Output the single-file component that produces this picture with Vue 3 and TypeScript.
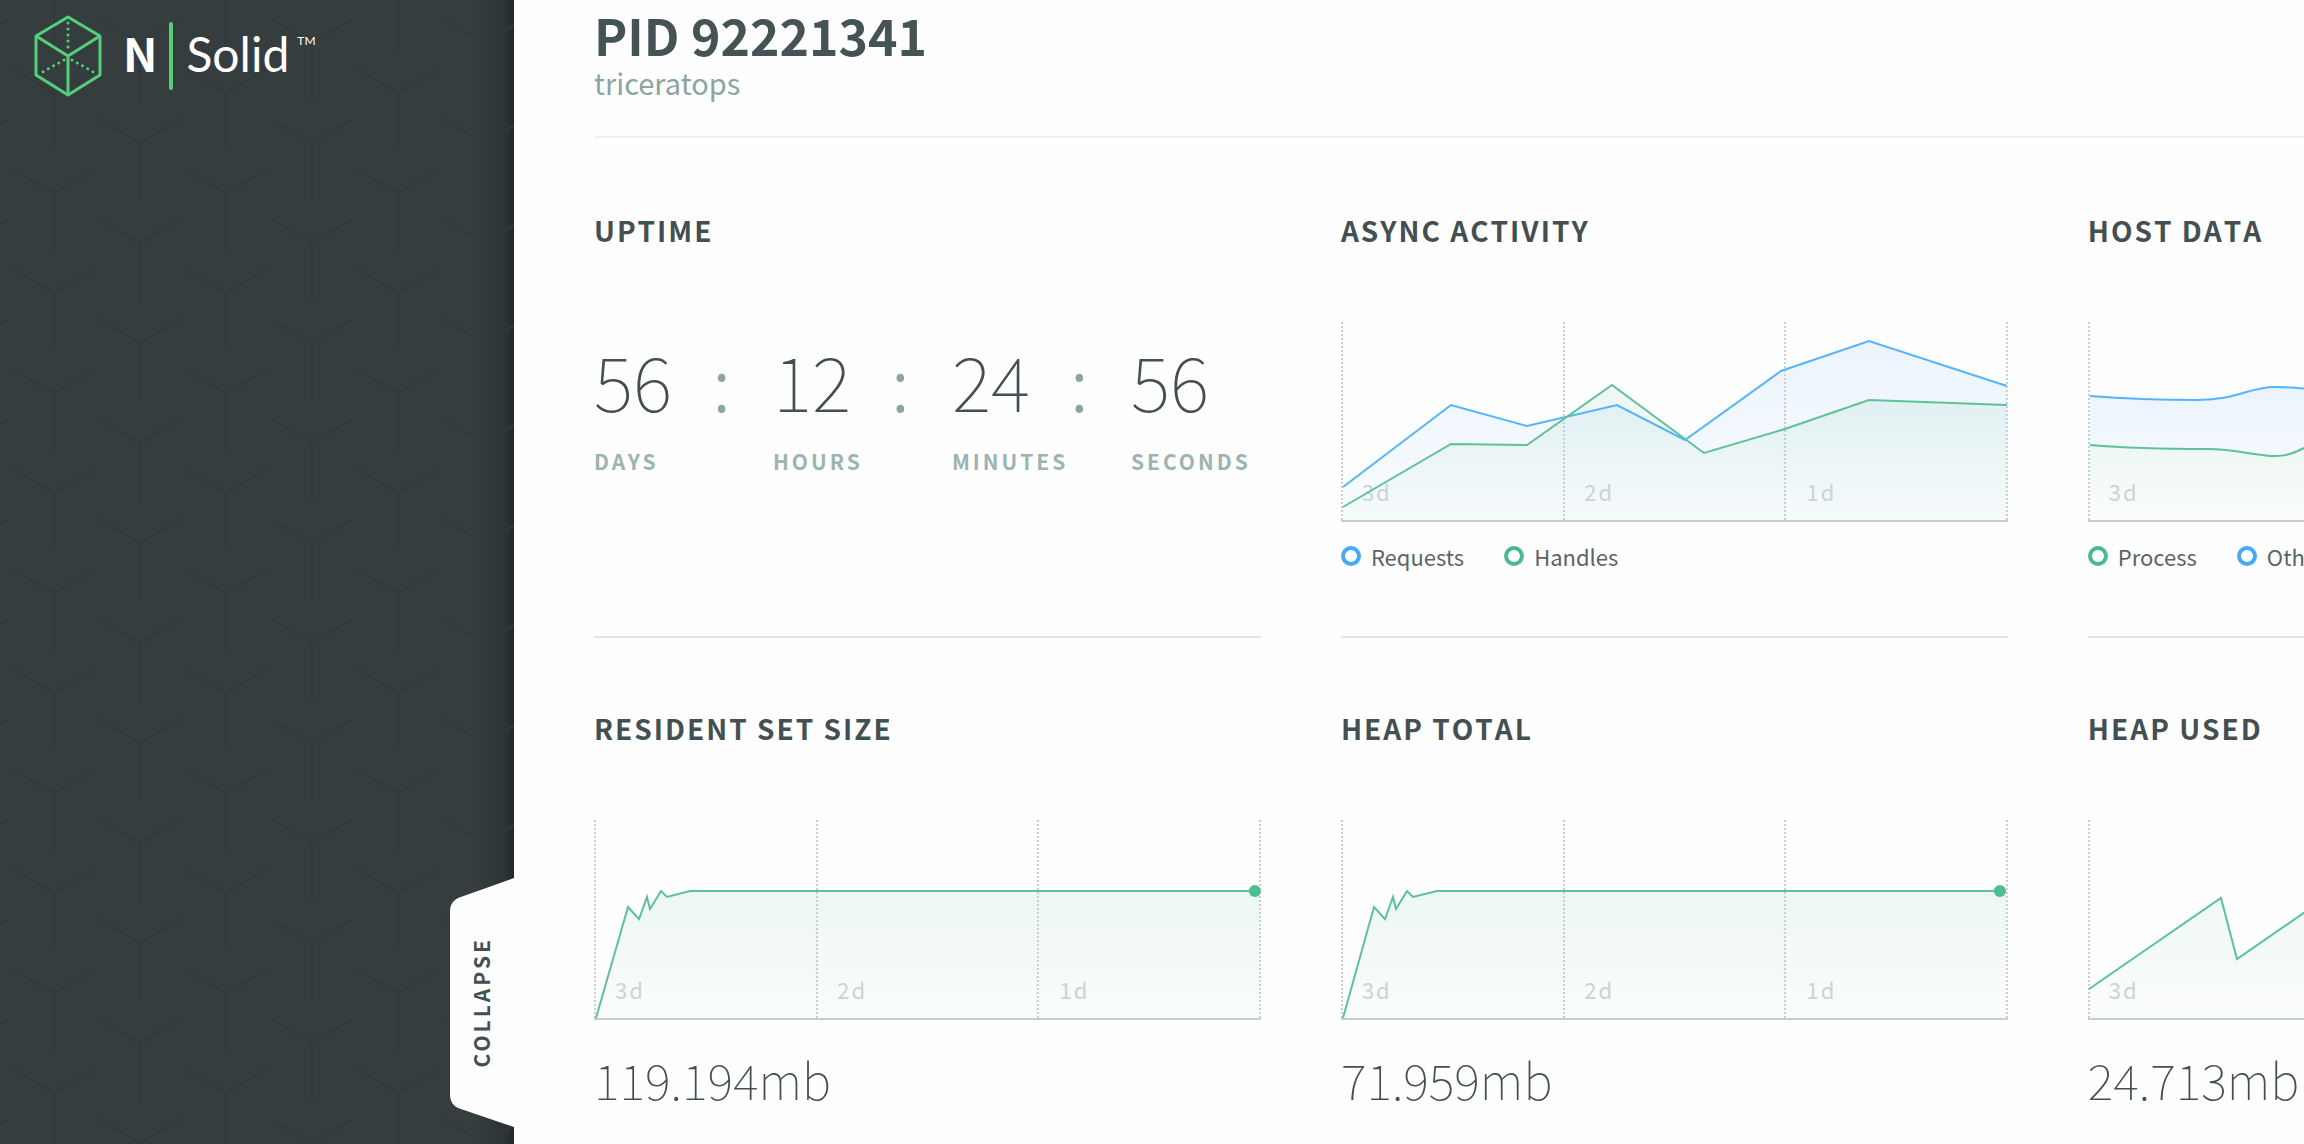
<script setup lang="ts">
type Tone = 'blue' | 'green'

interface Series {
  tone: Tone
  line: string
  start: number
  dot?: [number, number]
  opaque?: boolean
}

interface Legend {
  tone: Tone
  label: string
}

interface Panel {
  id: string
  title: string
  series: Series[]
  legend?: Legend[]
  value?: string
}

const uptime = [
  { value: '56', unit: 'DAYS' },
  { value: '12', unit: 'HOURS' },
  { value: '24', unit: 'MINUTES' },
  { value: '56', unit: 'SECONDS' },
]

const ticks = ['3d', '2d', '1d']
const gridLines = [1, 223, 444, 666]

const panels: Panel[] = [
  {
    id: 'async',
    title: 'ASYNC ACTIVITY',
    series: [
      { tone: 'blue', start: 2, line: 'M2 165L110 83L186 104L276 83L344 118L440 49L528 19L666 64' },
      { tone: 'green', start: 2, line: 'M2 185L110 122L186 123L271 63L363 131L444 107L528 78L666 83' },
    ],
    legend: [
      { tone: 'blue', label: 'Requests' },
      { tone: 'green', label: 'Handles' },
    ],
  },
  {
    id: 'host',
    title: 'HOST DATA',
    series: [
      { tone: 'blue', start: 2, line: 'M2 74C40 77 80 78 110 78C150 78 160 65 187 65C240 65 280 80 340 76C420 70 500 84 666 78' },
      { tone: 'green', start: 2, opaque: true, line: 'M2 123C50 127 90 127 120 127C150 127 166 134 188 134C212 134 220 118 250 116C350 110 450 126 666 120' },
    ],
    legend: [
      { tone: 'green', label: 'Process' },
      { tone: 'blue', label: 'Other' },
    ],
  },
  {
    id: 'rss',
    title: 'RESIDENT SET SIZE',
    series: [
      { tone: 'green', start: 2, line: 'M2 198L34 87L45 99L53 77L56 89L67 71L73 77L96 71H665', dot: [661, 71] },
    ],
    value: '119.194mb',
  },
  {
    id: 'heap-total',
    title: 'HEAP TOTAL',
    series: [
      { tone: 'green', start: 2, line: 'M2 198L33 87L44 99L52 77L55 89L66 71L72 77L96 71H665', dot: [659, 71] },
    ],
    value: '71.959mb',
  },
  {
    id: 'heap-used',
    title: 'HEAP USED',
    series: [
      { tone: 'green', start: 1, line: 'M1 169L133 78L149 139L281 48L297 109L429 60L445 110L666 40' },
    ],
    value: '24.713mb',
  },
]

const area = (s: Series): string => `${s.line}V198H${s.start}Z`
</script>

<template>
  <div class="app">
    <aside class="sidebar">
      <svg class="texture" aria-hidden="true">
        <defs>
          <pattern id="cubes" width="172" height="100" patternUnits="userSpaceOnUse">
            <g fill="none" stroke="#2f383a" stroke-width="2">
              <path d="M99 19L140 43L181 19M140 43V100M-73 19L-32 43L9 19" />
              <path d="M13 69L54 93L95 69M54 93V100M54 0V50" />
            </g>
          </pattern>
        </defs>
        <rect width="100%" height="100%" fill="url(#cubes)" />
      </svg>

      <a class="brand" href="#" aria-label="N|Solid">
        <svg class="cube" viewBox="0 0 70 82" fill="none" stroke="#55cf7b" stroke-width="3" stroke-linejoin="round">
          <path d="M35 2L67 21V60L35 80L3 60V21Z" />
          <path d="M3 21L35 41L67 21M35 41V80" />
          <path d="M35 8V37M31 45L6 59M39 45L64 59" stroke-linecap="round" stroke-dasharray="0 6" />
        </svg>
        <b class="brand-n">N</b>
        <i class="brand-bar"></i>
        <span class="brand-name">Solid</span>
        <span class="brand-tm">TM</span>
      </a>

      <button class="collapse" type="button">
        <svg class="collapse-shape" viewBox="0 0 66 250" aria-hidden="true">
          <path d="M66 1L10 21Q2 25 2 34V218Q2 227 10 231L66 250Z" fill="#fefefe" />
        </svg>
        <span class="collapse-label">COLLAPSE</span>
      </button>
    </aside>

    <main class="main">
      <header class="head">
        <h1>PID 92221341</h1>
        <p>triceratops</p>
      </header>

      <div class="panels">
        <section class="panel">
          <h2>UPTIME</h2>
          <div class="uptime">
            <div v-for="(part, i) in uptime" :key="part.unit" class="part">
              <div class="digits">
                <span>{{ part.value }}</span>
                <span v-if="i < 3" class="colon">:</span>
              </div>
              <div class="unit">{{ part.unit }}</div>
            </div>
          </div>
        </section>

        <section v-for="p in panels" :key="p.id" class="panel">
          <h2>{{ p.title }}</h2>
          <div class="chart">
            <svg class="plot" viewBox="0 0 667 200" preserveAspectRatio="none" aria-hidden="true">
              <defs>
                <linearGradient :id="`${p.id}-blue`" x1="0" y1="0" x2="0" y2="1">
                  <stop offset="0" stop-color="#3b98f0" stop-opacity="0.1" />
                  <stop offset="1" stop-color="#3b98f0" stop-opacity="0.02" />
                </linearGradient>
                <linearGradient :id="`${p.id}-green`" x1="0" y1="0" x2="0" y2="1">
                  <stop offset="0" stop-color="#4bb588" stop-opacity="0.1" />
                  <stop offset="1" stop-color="#4bb588" stop-opacity="0.02" />
                </linearGradient>
              </defs>
              <template v-for="s in p.series" :key="s.tone">
                <path v-if="s.opaque" :d="area(s)" fill="#fefefe" />
                <path :d="area(s)" :fill="`url(#${p.id}-${s.tone})`" />
              </template>
              <path v-for="x in gridLines" :key="x" class="grid-line" :d="`M${x} 0V198`" />
              <path class="axis" d="M0 199H667" />
            </svg>
            <div class="ticks">
              <span v-for="t in ticks" :key="t">{{ t }}</span>
            </div>
            <svg class="plot lines" viewBox="0 0 667 200" preserveAspectRatio="none" aria-hidden="true">
              <template v-for="s in p.series" :key="s.tone">
                <path :class="['line', s.tone]" :d="s.line" />
                <circle v-if="s.dot" :cx="s.dot[0]" :cy="s.dot[1]" r="6" fill="#4fbf8f" />
              </template>
            </svg>
          </div>
          <ul v-if="p.legend" class="legend">
            <li v-for="l in p.legend" :key="l.label">
              <i :class="['ring', l.tone]"></i>{{ l.label }}
            </li>
          </ul>
          <div v-if="p.value" class="value">{{ p.value }}</div>
        </section>
      </div>
    </main>
  </div>
</template>

<style>
body {
  margin: 0;
  background: #fefefe;
}
</style>

<style scoped>
.app {
  display: flex;
  min-height: 100vh;
  overflow: hidden;
  font-family: 'Noto Sans CJK SC', 'Noto Sans', sans-serif;
  color: #434f50;
}

h1,
h2,
p,
ul {
  margin: 0;
  padding: 0;
}

.sidebar {
  position: relative;
  flex: 0 0 514px;
  background: #353d3f;
  background-image: linear-gradient(to left, #202729 0, #2c3335 8px, #353d3f 40px);
}

.texture {
  position: absolute;
  inset: 0;
  width: 100%;
  height: 100%;
}

.brand {
  position: relative;
  display: flex;
  align-items: flex-start;
  height: 82px;
  padding: 15px 0 0 33px;
  color: #fff;
  font-family: Lato, sans-serif;
  text-decoration: none;
}

.cube {
  width: 70px;
  height: 82px;
}

.brand-n {
  margin-left: 20px;
  font-family: 'Noto Sans CJK SC', sans-serif;
  font-size: 46px;
  line-height: 74px;
  font-weight: 700;
}

.brand-bar {
  width: 4px;
  height: 68px;
  margin: 7px 13px 0 12px;
  border-radius: 2px;
  background: #55cf7b;
}

.brand-name {
  font-size: 48px;
  line-height: 78px;
  font-weight: 400;
}

.brand-tm {
  margin: 18px 0 0 8px;
  font-size: 12px;
  line-height: 16px;
}

.collapse {
  position: absolute;
  right: 0;
  bottom: 17px;
  display: flex;
  align-items: center;
  justify-content: center;
  width: 66px;
  height: 250px;
  padding: 0;
  border: 0;
  background: none;
  color: #434f50;
  font-family: inherit;
  cursor: pointer;
}

.collapse-shape {
  position: absolute;
  inset: 0;
}

.collapse-label {
  position: relative;
  font-size: 21px;
  line-height: 30px;
  font-weight: 700;
  letter-spacing: 3px;
  writing-mode: vertical-rl;
  transform: rotate(180deg);
}

.main {
  flex: 1;
  min-width: 0;
  padding-left: 80px;
}

.head {
  padding: 4px 0 36px;
  border-bottom: 2px solid #f0f1f1;
}

h1 {
  font-size: 50px;
  line-height: 60px;
  font-weight: 700;
  color: #465354;
}

.head p {
  font-size: 29px;
  line-height: 36px;
  color: #8ba5a0;
}

.panels {
  display: grid;
  grid-template-columns: repeat(3, 39%);
  column-gap: 80px;
  margin-top: 2px;
}

.panel {
  height: 426px;
  padding-top: 70px;
  border-bottom: 2px solid #e3e6e6;
}

.panel:nth-child(n + 4) {
  height: auto;
  border: 0;
}

h2 {
  font-size: 28px;
  line-height: 40px;
  font-weight: 700;
  font-kerning: none;
  letter-spacing: 2px;
}

.uptime {
  display: grid;
  grid-template-columns: 1fr 1fr 1fr 130px;
  margin-top: 90px;
}

.digits {
  display: flex;
  gap: 40px;
  font-size: 75px;
  line-height: 80px;
  font-weight: 100;
}

.colon {
  color: #8ba5a0;
  font-weight: 300;
}

.unit {
  margin-top: 24px;
  font-size: 21px;
  line-height: 34px;
  font-weight: 700;
  letter-spacing: 3px;
  color: #9db3af;
}

.chart {
  position: relative;
  height: 200px;
  margin-top: 72px;
}

.plot {
  display: block;
  width: 100%;
  height: 200px;
}

.lines {
  position: absolute;
  inset: 0;
}

.grid-line {
  fill: none;
  stroke: #c8cdcd;
  stroke-width: 2;
  stroke-dasharray: 2 2;
}

.axis {
  stroke: #c3cecd;
  stroke-width: 2;
}

.line {
  fill: none;
  stroke-width: 2;
}

.line.blue {
  stroke: #55b4fb;
}

.line.green {
  stroke: #5ec299;
}

.ticks {
  position: absolute;
  inset: auto 0 15px;
  display: grid;
  grid-template-columns: 1fr 1fr 1fr;
}

.ticks span {
  padding-left: 21px;
  font-size: 22px;
  line-height: 32px;
  letter-spacing: 2px;
  color: #cad5d3;
}

.legend {
  display: flex;
  gap: 40px;
  margin-top: 20px;
  list-style: none;
  font-size: 22px;
  line-height: 28px;
  color: #5a6465;
}

.legend li {
  display: flex;
  align-items: center;
  gap: 10px;
}

.ring {
  box-sizing: border-box;
  width: 20px;
  height: 20px;
  border: 4px solid;
  border-radius: 50%;
}

.ring.blue {
  border-color: #41abfa;
}

.ring.green {
  border-color: #4eb98c;
}

.value {
  margin-top: 28px;
  font-size: 49px;
  line-height: 62px;
  font-weight: 100;
}
</style>
